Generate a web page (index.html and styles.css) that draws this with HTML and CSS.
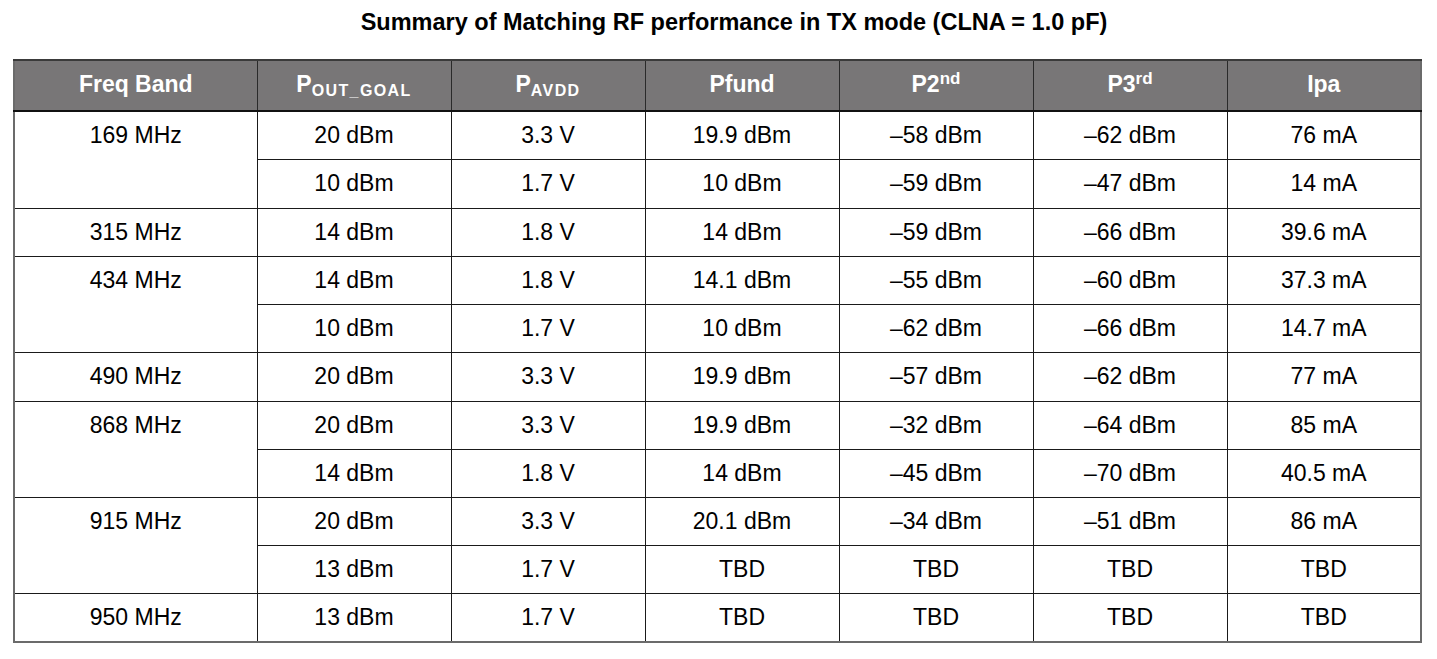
FILE: index.html
```html
<!DOCTYPE html>
<html>
<head>
<meta charset="utf-8">
<link rel="stylesheet" href="styles.css">
</head>
<body>
<div class="page">
  <h1 class="title">Summary of Matching RF performance in TX mode (CLNA = 1.0 pF)</h1>
  <table class="rf">
    <colgroup>
      <col class="c-first"><col class="c"><col class="c"><col class="c"><col class="c"><col class="c"><col class="c">
    </colgroup>
    <thead>
      <tr>
        <th>Freq Band</th>
        <th>P<sub>OUT_GOAL</sub></th>
        <th>P<sub>AVDD</sub></th>
        <th>Pfund</th>
        <th>P2<sup>nd</sup></th>
        <th>P3<sup>rd</sup></th>
        <th>Ipa</th>
      </tr>
    </thead>
    <tbody>
      <tr><td rowspan="2">169 MHz</td><td>20 dBm</td><td>3.3 V</td><td>19.9 dBm</td><td>–58 dBm</td><td>–62 dBm</td><td>76 mA</td></tr>
      <tr class="tall"><td>10 dBm</td><td>1.7 V</td><td>10 dBm</td><td>–59 dBm</td><td>–47 dBm</td><td>14 mA</td></tr>
      <tr><td>315 MHz</td><td>14 dBm</td><td>1.8 V</td><td>14 dBm</td><td>–59 dBm</td><td>–66 dBm</td><td>39.6 mA</td></tr>
      <tr><td rowspan="2">434 MHz</td><td>14 dBm</td><td>1.8 V</td><td>14.1 dBm</td><td>–55 dBm</td><td>–60 dBm</td><td>37.3 mA</td></tr>
      <tr><td>10 dBm</td><td>1.7 V</td><td>10 dBm</td><td>–62 dBm</td><td>–66 dBm</td><td>14.7 mA</td></tr>
      <tr class="tall"><td>490 MHz</td><td>20 dBm</td><td>3.3 V</td><td>19.9 dBm</td><td>–57 dBm</td><td>–62 dBm</td><td>77 mA</td></tr>
      <tr><td rowspan="2">868 MHz</td><td>20 dBm</td><td>3.3 V</td><td>19.9 dBm</td><td>–32 dBm</td><td>–64 dBm</td><td>85 mA</td></tr>
      <tr><td>14 dBm</td><td>1.8 V</td><td>14 dBm</td><td>–45 dBm</td><td>–70 dBm</td><td>40.5 mA</td></tr>
      <tr><td rowspan="2">915 MHz</td><td>20 dBm</td><td>3.3 V</td><td>20.1 dBm</td><td>–34 dBm</td><td>–51 dBm</td><td>86 mA</td></tr>
      <tr><td>13 dBm</td><td>1.7 V</td><td>TBD</td><td>TBD</td><td>TBD</td><td>TBD</td></tr>
      <tr class="tall"><td>950 MHz</td><td>13 dBm</td><td>1.7 V</td><td>TBD</td><td>TBD</td><td>TBD</td><td>TBD</td></tr>
    </tbody>
  </table>
</div>
</body>
</html>
```

FILE: styles.css
```css
html, body {
  margin: 0;
  padding: 0;
  background: #ffffff;
}

.page {
  padding: 0 16px 0 13px;
  font-family: "Liberation Sans", Arial, sans-serif;
  color: #000;
}

.title {
  margin: 0 0 24px 0;
  padding: 9px 0 0 34px;
  width: 1374px;
  text-align: center;
  font-size: 23.5px;
  line-height: 26px;
  font-weight: bold;
}

.rf {
  width: 1408px;
  table-layout: fixed;
  border-collapse: collapse;
  border: 2px solid #6b6b6b;
  font-size: 23px;
}

.c-first { width: 243px; }
.c { width: 194px; }

.rf th {
  background: #787677;
  color: #ffffff;
  font-weight: bold;
  height: 51px;
  box-sizing: border-box;
  padding: 10px 0 0 0;
  line-height: 26px;
  vertical-align: top;
  text-align: center;
  border: 1px solid #2a2a2a;
  border-top: 2px solid #3a3a3a;
  border-bottom: 2px solid #111;
}

.rf th sub {
  font-size: 16px;
  letter-spacing: 1.4px;
  vertical-align: -4px;
  line-height: 0;
}

.rf th sup {
  font-size: 17px;
  vertical-align: 8px;
  line-height: 0;
}

.rf tbody tr {
  height: 48px;
}

.rf tbody tr.tall {
  height: 49px;
}

.rf td {
  padding: 10px 0 0 0;
  line-height: 26px;
  vertical-align: top;
  text-align: center;
  border: 1px solid #1a1a1a;
}
```
